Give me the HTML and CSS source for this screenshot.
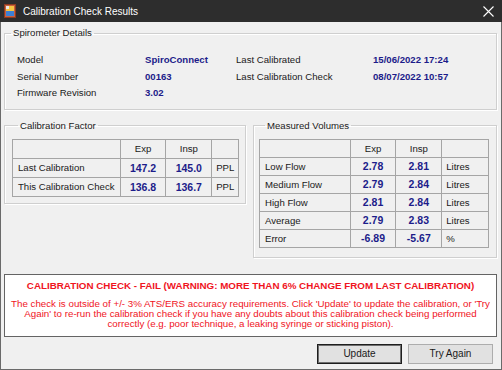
FILE: index.html
```html
<!DOCTYPE html>
<html lang="en">
<head>
    <meta charset="UTF-8">
    <title>Calibration Check Results</title>
    <link rel="stylesheet" href="styles.css">
</head>
<body>
    <div class="window">
        <div class="titlebar">
            <svg class="app-icon" width="12" height="14" viewBox="0 0 12 14">
                <rect x="0.5" y="0.5" width="11" height="13" fill="#c9603d" stroke="#8a3a22"/>
                <rect x="2" y="2" width="8" height="5" fill="#f4c542"/>
                <rect x="2" y="7" width="8" height="5" fill="#3b7fd4"/>
                <rect x="2" y="2" width="3" height="3" fill="#e8e8e8"/>
            </svg>
            <span class="title">Calibration Check Results</span>
            <svg class="close" width="11" height="11" viewBox="0 0 11 11">
                <path d="M0.5 0.5 L10.5 10.5 M10.5 0.5 L0.5 10.5" stroke="#fff" stroke-width="1.1"/>
            </svg>
        </div>

        <div class="content">
            <fieldset class="group details">
                <legend>Spirometer Details</legend>
                <div class="details-grid">
                    <span>Model</span>
                    <span class="value">SpiroConnect</span>
                    <span>Last Calibrated</span>
                    <span class="value">15/06/2022 17:24</span>

                    <span>Serial Number</span>
                    <span class="value">00163</span>
                    <span>Last Calibration Check</span>
                    <span class="value">08/07/2022 10:57</span>

                    <span>Firmware Revision</span>
                    <span class="value">3.02</span>
                </div>
            </fieldset>

            <div class="panels">
                <fieldset class="group factor">
                    <legend>Calibration Factor</legend>
                    <table class="grid">
                        <tr>
                            <th class="name"></th>
                            <th class="num">Exp</th>
                            <th class="num">Insp</th>
                            <th class="unit"></th>
                        </tr>
                        <tr>
                            <td class="name">Last Calibration</td>
                            <td class="value">147.2</td>
                            <td class="value">145.0</td>
                            <td class="unit">PPL</td>
                        </tr>
                        <tr>
                            <td class="name">This Calibration Check</td>
                            <td class="value">136.8</td>
                            <td class="value">136.7</td>
                            <td class="unit">PPL</td>
                        </tr>
                    </table>
                </fieldset>

                <fieldset class="group volumes">
                    <legend>Measured Volumes</legend>
                    <table class="grid">
                        <tr>
                            <th class="name"></th>
                            <th class="num">Exp</th>
                            <th class="num">Insp</th>
                            <th class="unit"></th>
                        </tr>
                        <tr>
                            <td class="name">Low Flow</td>
                            <td class="value">2.78</td>
                            <td class="value">2.81</td>
                            <td class="unit">Litres</td>
                        </tr>
                        <tr>
                            <td class="name">Medium Flow</td>
                            <td class="value">2.79</td>
                            <td class="value">2.84</td>
                            <td class="unit">Litres</td>
                        </tr>
                        <tr>
                            <td class="name">High Flow</td>
                            <td class="value">2.81</td>
                            <td class="value">2.84</td>
                            <td class="unit">Litres</td>
                        </tr>
                        <tr>
                            <td class="name">Average</td>
                            <td class="value">2.79</td>
                            <td class="value">2.83</td>
                            <td class="unit">Litres</td>
                        </tr>
                        <tr>
                            <td class="name">Error</td>
                            <td class="value">-6.89</td>
                            <td class="value">-5.67</td>
                            <td class="unit">%</td>
                        </tr>
                    </table>
                </fieldset>
            </div>

            <div class="warning">
                <p class="warning-title">CALIBRATION CHECK - FAIL (WARNING: MORE THAN 6% CHANGE FROM LAST CALIBRATION)</p>
                <p class="warning-text">The check is outside of +/- 3% ATS/ERS accuracy requirements. Click 'Update' to update the calibration, or 'Try Again' to re-run the calibration check if you have any doubts about this calibration check being performed correctly (e.g. poor technique, a leaking syringe or sticking piston).</p>
            </div>

            <div class="buttons">
                <button class="default">Update</button>
                <button>Try Again</button>
            </div>
        </div>
    </div>
</body>
</html>
```

FILE: styles.css
```css
* {
    box-sizing: border-box;
}

body {
    margin: 0;
    width: 502px;
    height: 370px;
    overflow: hidden;
    font-family: "Liberation Sans", Arial, sans-serif;
    font-size: 9.6px;
    color: #1a1a1a;
    background: #f0f0f0;
}

.window {
    height: 370px;
    border-left: 1px solid #6a6a6a;
    border-right: 1px solid #6a6a6a;
    border-bottom: 1px solid #6a6a6a;
    background: #f0f0f0;
}

/* Title bar */
.titlebar {
    height: 22px;
    margin: 0 -1px;
    background: #2d2d2d;
    display: flex;
    align-items: center;
    padding: 0 8px 0 4px;
}

.app-icon {
    margin-right: 7px;
}

.title {
    color: #fff;
    font-size: 10px;
    flex: 1;
}

/* Content */
.content {
    padding: 0 4px 0 3px;
}

.group {
    margin: 0;
    padding: 0;
    min-width: 0;
    border: 1px solid #cfcfcf;
    box-shadow: inset 1px 1px 0 #fff, 1px 1px 0 #fff;
}

.group legend {
    margin-left: 6px;
    padding: 0 2px;
    line-height: 12px;
}

.details {
    margin-top: 5px;
}

.details-grid {
    display: grid;
    grid-template-columns: 128px 91px 137px auto;
    line-height: 16.5px;
    padding: 13px 12px 7px;
}

.value {
    font-weight: bold;
    color: #1c1c8a;
}

.panels {
    display: flex;
    align-items: flex-start;
    gap: 7px;
    margin-top: 10px;
}

.factor {
    width: 242px;
    padding: 7px 6px 6px 7px;
}

.volumes {
    flex: 1;
    padding: 7px 7px 9px 5px;
}

.grid {
    width: 100%;
    border-collapse: collapse;
    border: 1px solid #a5a5a5;
}

.grid th,
.grid td {
    border: 1px solid #a5a5a5;
    padding: 0;
    font-weight: normal;
    white-space: nowrap;
}

.factor .grid tr {
    height: 19px;
}

.volumes .grid tr {
    height: 18px;
}

.grid .name {
    text-align: left;
    padding-left: 5px;
}

.grid .num,
.grid .value {
    text-align: center;
}

.grid .value {
    font-weight: bold;
    font-size: 10.5px;
}

.grid .unit {
    text-align: left;
    padding-left: 4px;
}

.factor .name { width: 108px; }
.factor .num { width: 47px; }
.factor .unit { width: 27px; }

.volumes .name { width: 91px; }
.volumes .num { width: 46px; }
.volumes .unit { width: 47px; }

/* Warning */
.warning {
    margin-top: 16px;
    background: #fff;
    border: 1px solid #646464;
    padding: 5px 6px 7px;
    text-align: center;
    color: #f0141e;
}

.warning p {
    margin: 0;
}

.warning-title {
    font-weight: bold;
    line-height: 12px;
    font-size: 9.8px;
}

.warning-text {
    margin-top: 7px !important;
    line-height: 10px;
    font-size: 9.75px;
}

/* Buttons */
.buttons {
    display: flex;
    justify-content: flex-end;
    gap: 6px;
    margin-top: 7px;
    padding-right: 4px;
}

button {
    width: 85px;
    height: 20px;
    font-family: inherit;
    font-size: 10px;
    color: #1a1a1a;
    background: #e1e1e1;
    border: 1px solid #adadad;
    padding: 0;
}

button.default {
    border: 1px solid #1e1e1e;
    box-shadow: inset 0 0 0 1px #6e6e6e;
}
```
